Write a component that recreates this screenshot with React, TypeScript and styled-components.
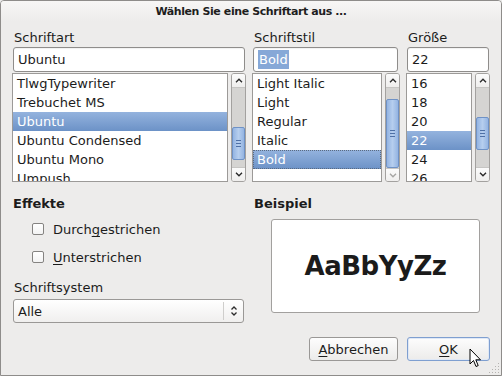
import React from 'react';
import styled, { createGlobalStyle } from 'styled-components';

const Global = createGlobalStyle`
  html, body { margin: 0; padding: 0; background: #edeceb; }
  body { font-family: "DejaVu Sans", "Liberation Sans", sans-serif; font-size: 13px; color: #1c1c1c; }
  * { box-sizing: border-box; }
`;

const Window = styled.div`
  position: relative;
  width: 502px;
  height: 376px;
  border: 1px solid #8e8c8a;
  border-radius: 4px 4px 0 0;
  background: #edeceb;
  display: flex;
  flex-direction: column;
  overflow: hidden;
`;

const TitleBar = styled.div`
  height: 21px;
  display: flex;
  align-items: center;
  justify-content: center;
  font-weight: bold;
  font-size: 11px;
  letter-spacing: -0.4px;
  color: #1e1e1e;
  background: linear-gradient(#f7f6f5, #edeceb);
`;

const Body = styled.div`
  padding: 7px 10px 0 11px;
  display: flex;
  flex-direction: column;
`;

const TopGrid = styled.div`
  display: grid;
  grid-template-columns: 234px 148px 84px;
  column-gap: 6px;
`;

const Column = styled.div`
  display: flex;
  flex-direction: column;
`;

const FieldLabel = styled.div`
  height: 17px;
  line-height: 17px;
  padding-left: 2px;
`;

const TextInput = styled.div<{ $ml: number; $mr: number }>`
  margin: 1px ${p => p.$mr}px 0 ${p => p.$ml}px;
  height: 25px;
  border: 1px solid #8f8d8b;
  border-radius: 3px;
  background: #fff;
  display: flex;
  align-items: center;
  padding-left: 4px;
  box-shadow: inset 0 1px 1px rgba(0,0,0,0.06);
`;

const Selected = styled.span`
  background: #86a8d7;
  color: #fff;
  padding: 2px 1px;
`;

const ListArea = styled.div`
  margin-top: 1px;
  display: flex;
  gap: 3px;
  height: 109px;
`;

const List = styled.div`
  flex: 1;
  border: 1px solid #9c9a98;
  background: #fff;
  overflow: hidden;
`;

const Row = styled.div<{ $sel?: boolean; $focus?: boolean }>`
  height: 19px;
  line-height: 19px;
  padding-left: 4px;
  white-space: nowrap;
  ${p => p.$sel ? `
    color: #fff;
    background: linear-gradient(#94b3de, #6c92c7);
  ` : ''}
  ${p => p.$focus ? `
    outline: 1px dotted #5a6a80;
    outline-offset: -1px;
  ` : ''}
`;

const Scroll = styled.div`
  width: 15px;
  border: 1px solid #a3a19f;
  border-radius: 3px;
  background: #f4f3f2;
  display: flex;
  flex-direction: column;
  overflow: hidden;
`;

const ArrowBtn = styled.div`
  height: 13px;
  flex: none;
  display: flex;
  align-items: center;
  justify-content: center;
  background: linear-gradient(#fbfbfb, #efeeed);
`;

const Trough = styled.div`
  flex: 1;
  background: #d5d4d2;
  display: flex;
  flex-direction: column;
  border-top: 1px solid #c6c5c3;
  border-bottom: 1px solid #c6c5c3;
`;

const Thumb = styled.div<{ $top: number; $h: number }>`
  margin-top: ${p => p.$top}px;
  height: ${p => p.$h}px;
  flex: none;
  background: linear-gradient(90deg, #94b4e2, #b6ceee 50%, #94b4e2);
  border: 1px solid #6f92c6;
  border-radius: 2px;
  display: flex;
  align-items: center;
  justify-content: center;
`;

const Chevron = ({ dir, disabled }: { dir: 'up' | 'down'; disabled?: boolean }) => (
  <svg width="8" height="5" viewBox="0 0 8 5">
    <path
      d={dir === 'up' ? 'M1 4.2 L4 1.2 L7 4.2' : 'M1 0.8 L4 3.8 L7 0.8'}
      fill="none"
      stroke={disabled ? '#a8a7a5' : '#2c2c2c'}
      strokeWidth="1.4"
    />
  </svg>
);

const Grip = () => (
  <svg width="5" height="7" viewBox="0 0 5 7">
    <path d="M0 0.5 H5 M0 3.5 H5 M0 6.5 H5" stroke="#4e70a6" strokeWidth="1" />
  </svg>
);

const Scrollbar = ({ top, h, downDisabled }: { top: number; h: number; downDisabled?: boolean }) => (
  <Scroll>
    <ArrowBtn><Chevron dir="up" /></ArrowBtn>
    <Trough>
      <Thumb $top={top} $h={h}><Grip /></Thumb>
    </Trough>
    <ArrowBtn><Chevron dir="down" disabled={downDisabled} /></ArrowBtn>
  </Scroll>
);

const BottomGrid = styled.div`
  margin-top: 13px;
  display: grid;
  grid-template-columns: 233px 237px;
  column-gap: 8px;
`;

const SectionTitle = styled.div`
  height: 17px;
  line-height: 17px;
  font-weight: bold;
  padding-left: 1px;
`;

const CheckList = styled.div`
  margin-top: 5px;
  display: flex;
  flex-direction: column;
  gap: 4px;
`;

const CheckRow = styled.label`
  height: 24px;
  display: flex;
  align-items: center;
  gap: 9px;
  padding-left: 20px;
`;

const Box = styled.span`
  width: 12px;
  height: 12px;
  border: 1px solid #858381;
  border-radius: 2px;
  background: linear-gradient(#ffffff, #f3f3f3);
`;

const U = styled.span`
  text-decoration: underline;
  text-decoration-skip-ink: none;
  text-underline-offset: 2px;
`;

const SysLabel = styled(FieldLabel)`
  margin-top: 10px;
`;

const Combo = styled.div`
  margin: 3px 1px 0 1px;
  height: 24px;
  border: 1px solid #9a9896;
  border-radius: 3px;
  background: linear-gradient(#ffffff, #f0efee);
  display: flex;
  align-items: center;
`;

const ComboText = styled.div`
  flex: 1;
  padding-left: 4px;
`;

const ComboSep = styled.div`
  width: 1px;
  height: 18px;
  background: #cfcecc;
`;

const ComboArrows = styled.div`
  width: 19px;
  display: flex;
  justify-content: center;
`;

const Preview = styled.div`
  margin: 7px 0 0 18px;
  width: 209px;
  height: 94px;
  background: #fff;
  border: 1px solid #a2a09e;
  border-radius: 3px;
  display: flex;
  align-items: center;
  justify-content: center;
  font-weight: bold;
  font-size: 26px;
  letter-spacing: -0.5px;
  color: #1b1b1b;
`;

const ButtonRow = styled.div`
  margin-top: 14px;
  display: flex;
  justify-content: flex-end;
  gap: 9px;
  padding-right: 1px;
`;

const Button = styled.div<{ $w: number; $default?: boolean }>`
  width: ${p => p.$w}px;
  height: 24px;
  border: 1px solid ${p => p.$default ? '#7f9fd0' : '#9a9896'};
  border-radius: 3px;
  background: linear-gradient(#fdfdfd, #ecebea);
  display: flex;
  align-items: center;
  justify-content: center;
  box-shadow: ${p => p.$default ? 'inset 0 0 0 1px #dfe8f6' : 'none'};
`;

const Cursor = styled.svg`
  position: absolute;
  left: 468px;
  top: 347px;
`;

const ResizeGrip = styled.svg`
  position: absolute;
  right: 1px;
  bottom: 1px;
`;

const fonts = ['TlwgTypewriter', 'Trebuchet MS', 'Ubuntu', 'Ubuntu Condensed', 'Ubuntu Mono', 'Umpush'];
const styles = ['Light Italic', 'Light', 'Regular', 'Italic', 'Bold'];
const sizes = ['16', '18', '20', '22', '24', '26'];

export default function App() {
  return (
    <>
      <Global />
      <Window>
        <TitleBar>Wählen Sie eine Schriftart aus ...</TitleBar>
        <Body>
          <TopGrid>
            <Column>
              <FieldLabel>Schriftart</FieldLabel>
              <TextInput $ml={1} $mr={1}>Ubuntu</TextInput>
              <ListArea>
                <List>
                  {fonts.map(f => <Row key={f} $sel={f === 'Ubuntu'}>{f}</Row>)}
                </List>
                <Scrollbar top={39} h={33} />
              </ListArea>
            </Column>
            <Column>
              <FieldLabel>Schriftstil</FieldLabel>
              <TextInput $ml={1} $mr={2}><Selected>Bold</Selected></TextInput>
              <ListArea>
                <List>
                  {styles.map(s => <Row key={s} $sel={s === 'Bold'} $focus={s === 'Bold'}>{s}</Row>)}
                </List>
                <Scrollbar top={11} h={69} downDisabled />
              </ListArea>
            </Column>
            <Column>
              <FieldLabel>Größe</FieldLabel>
              <TextInput $ml={1} $mr={1}>22</TextInput>
              <ListArea>
                <List>
                  {sizes.map(s => <Row key={s} $sel={s === '22'}>{s}</Row>)}
                </List>
                <Scrollbar top={29} h={33} />
              </ListArea>
            </Column>
          </TopGrid>
          <BottomGrid>
            <Column>
              <SectionTitle>Effekte</SectionTitle>
              <CheckList>
                <CheckRow><Box /><span>Durch<U>g</U>estrichen</span></CheckRow>
                <CheckRow><Box /><span><U>U</U>nterstrichen</span></CheckRow>
              </CheckList>
              <SysLabel>Schriftsystem</SysLabel>
              <Combo>
                <ComboText>Alle</ComboText>
                <ComboSep />
                <ComboArrows>
                  <svg width="8" height="12" viewBox="0 0 8 12">
                    <path d="M1.5 4.5 L4 2 L6.5 4.5 M1.5 7.5 L4 10 L6.5 7.5" fill="none" stroke="#2c2c2c" strokeWidth="1.3" />
                  </svg>
                </ComboArrows>
              </Combo>
            </Column>
            <Column>
              <SectionTitle>Beispiel</SectionTitle>
              <Preview>AaBbYyZz</Preview>
            </Column>
          </BottomGrid>
          <ButtonRow>
            <Button $w={89}><span><U>A</U>bbrechen</span></Button>
            <Button $w={83} $default><span><U>O</U>K</span></Button>
          </ButtonRow>
        </Body>
        <Cursor width="13" height="21" viewBox="0 0 13 21">
          <path d="M1 1 L1 16 L4.5 12.5 L7 18.5 L9.2 17.6 L6.8 11.8 L11.5 11.8 Z" fill="#fff" stroke="#000" strokeWidth="1" strokeLinejoin="round" />
        </Cursor>
        <ResizeGrip width="12" height="12" viewBox="0 0 12 12">
          {[[10, 2], [10, 5], [7, 5], [10, 8], [7, 8], [4, 8], [10, 11], [7, 11], [4, 11], [1, 11]].map(([x, y], i) => (
            <rect key={i} x={x} y={y - 1} width="1" height="1" fill="#b5b3b0" />
          ))}
        </ResizeGrip>
      </Window>
    </>
  );
}
